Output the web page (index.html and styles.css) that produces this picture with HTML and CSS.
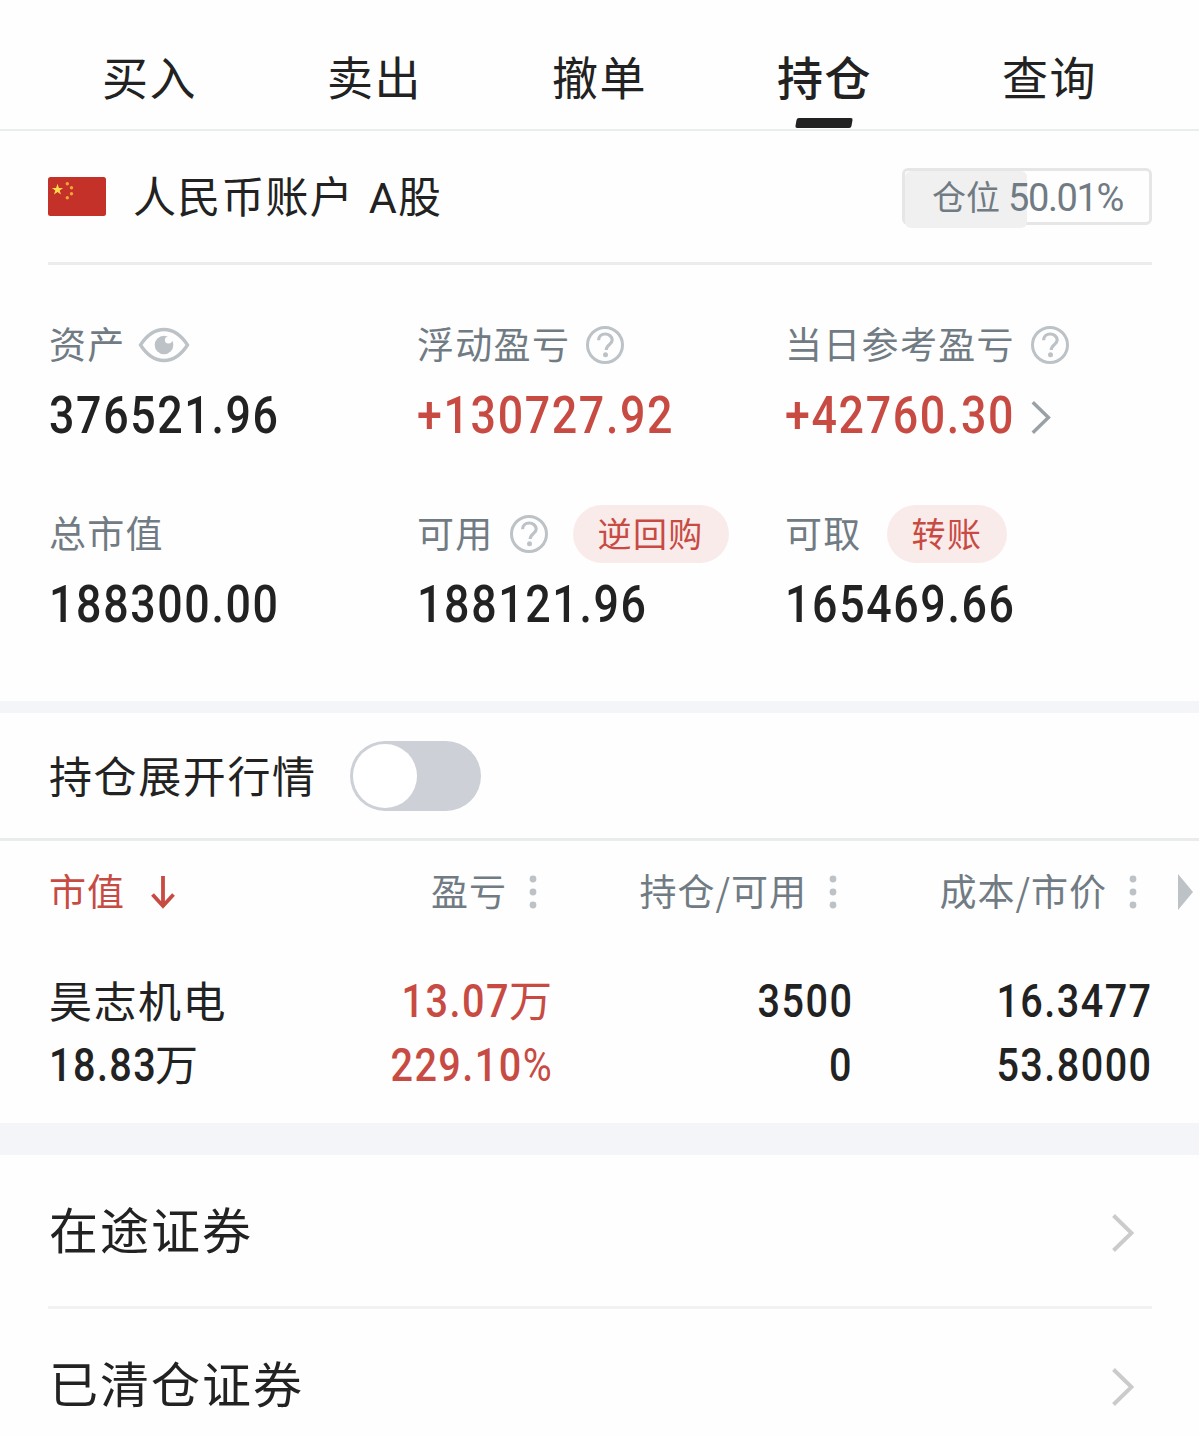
FILE: index.html
```html
<!DOCTYPE html>
<html lang="zh-CN">
<head>
  <meta charset="UTF-8">
  <meta name="viewport" content="width=device-width, initial-scale=1">
  <title>持仓</title>
  <link rel="stylesheet" href="styles.css">
</head>
<body>
  <!-- shared icons -->
  <svg class="sprite" width="0" height="0">
    <symbol id="help" viewBox="0 0 38 38">
      <circle cx="19" cy="19" r="17.5" fill="none" stroke="#bcc2c6" stroke-width="3"/>
      <path d="M12.600 14.200C12.600 10.400 15.500 8 19.200 8S26.200 10.500 26.200 14C26.200 18.500 20.200 18.800 20.200 24" fill="none" stroke="#bcc2c6" stroke-width="3.200"/>
      <circle cx="19.500" cy="28.800" r="2.500" fill="#bcc2c6"/>
    </symbol>
    <symbol id="dots" viewBox="0 0 8 34">
      <circle cx="4" cy="4" r="3.400" fill="#bcc2c6"/>
      <circle cx="4" cy="17" r="3.400" fill="#bcc2c6"/>
      <circle cx="4" cy="30" r="3.400" fill="#bcc2c6"/>
    </symbol>
    <symbol id="chevron" viewBox="0 0 22 38">
      <path d="M1.500 1.500 19.500 19 1.500 36.500" fill="none" stroke="currentColor" stroke-width="4"/>
    </symbol>
  </svg>

  <nav class="tabs">
    <a class="tab">买入</a>
    <a class="tab">卖出</a>
    <a class="tab">撤单</a>
    <a class="tab active">持仓</a>
    <a class="tab">查询</a>
  </nav>

  <header class="account">
    <svg class="flag" viewBox="0 0 58 39">
      <rect width="58" height="39" rx="2.500" fill="#c43128"/>
      <path d="M9.500 6.800 10.900 10.900 15.100 10.900 11.700 13.500 13 17.600 9.500 15.100 6 17.600 7.300 13.500 3.900 10.900 8.100 10.900Z" fill="#fbdc4b"/>
      <g fill="#f0a63a">
        <circle cx="19.300" cy="6.800" r="1.700"/>
        <circle cx="23.500" cy="10.800" r="1.700"/>
        <circle cx="23.500" cy="16.800" r="1.700"/>
        <circle cx="19.300" cy="20.700" r="1.700"/>
      </g>
    </svg>
    <h1 class="account-name">人民币账户 <span class="latin">A</span>股</h1>
    <div class="position">
      <div class="position-fill"></div>
      <span class="position-text">仓位<span class="percent">50.01%</span></span>
    </div>
  </header>

  <section class="assets">
    <div class="asset">
      <div class="label">资产
        <svg class="eye" viewBox="0 0 52 36">
          <path d="M2.500 18C9 8 17 2.500 26 2.500S43 8 49.500 18C43 28 35 33.500 26 33.500S9 28 2.500 18Z" fill="none" stroke="#bcc2c6" stroke-width="3.300"/>
          <circle cx="26" cy="18" r="9.300" fill="#bcc2c6"/>
          <circle cx="30.500" cy="13" r="3.600" fill="#fefefe"/>
        </svg>
      </div>
      <div class="value"><span class="num">376521.96</span></div>
    </div>
    <div class="asset">
      <div class="label">浮动盈亏<svg class="help"><use href="#help"/></svg></div>
      <div class="value red"><span class="num">+130727.92</span></div>
    </div>
    <div class="asset">
      <div class="label">当日参考盈亏<svg class="help"><use href="#help"/></svg></div>
      <div class="value red"><span class="num">+42760.30</span><svg class="more"><use href="#chevron"/></svg></div>
    </div>
    <div class="asset">
      <div class="label">总市值</div>
      <div class="value"><span class="num">188300.00</span></div>
    </div>
    <div class="asset">
      <div class="label">可用<svg class="help"><use href="#help"/></svg><a class="pill">逆回购</a></div>
      <div class="value"><span class="num">188121.96</span></div>
    </div>
    <div class="asset">
      <div class="label">可取<a class="pill">转账</a></div>
      <div class="value"><span class="num">165469.66</span></div>
    </div>
  </section>

  <div class="quote-row">
    <span>持仓展开行情</span>
    <span class="switch"></span>
  </div>

  <section class="holdings">
    <div class="row head">
      <div class="cell sorted">市值
        <svg class="sort" viewBox="0 0 26 34">
          <path d="M13 1V31M2.500 19.500 13 31 23.500 19.500" fill="none" stroke="currentColor" stroke-width="3.800"/>
        </svg>
      </div>
      <div class="cell">盈亏<svg class="dots"><use href="#dots"/></svg></div>
      <div class="cell">持仓/可用<svg class="dots"><use href="#dots"/></svg></div>
      <div class="cell">成本/市价<svg class="dots"><use href="#dots"/></svg></div>
      <svg class="next" viewBox="0 0 15 36"><path d="M0 0 15 18 0 36Z" fill="#bcc2c6"/></svg>
    </div>
    <div class="row stock">
      <div class="cell">
        <div class="line name">昊志机电</div>
        <div class="line"><span class="num">18.83</span><span class="unit">万</span></div>
      </div>
      <div class="cell red">
        <div class="line"><span class="num">13.07</span><span class="unit">万</span></div>
        <div class="line"><span class="num">229.10<span class="pct">%</span></span></div>
      </div>
      <div class="cell">
        <div class="line"><span class="num">3500</span></div>
        <div class="line"><span class="num">0</span></div>
      </div>
      <div class="cell">
        <div class="line"><span class="num">16.3477</span></div>
        <div class="line"><span class="num">53.8000</span></div>
      </div>
    </div>
  </section>

  <section class="links">
    <a class="link">在途证券<svg class="go"><use href="#chevron"/></svg></a>
    <a class="link">已清仓证券<svg class="go"><use href="#chevron"/></svg></a>
  </section>
</body>
</html>
```
FILE: styles.css
```css
:root {
  --bg: #fefefe;
  --text: #222;
  --muted: #717b83;
  --red: #c84b43;
  --line: #ececec;
  --band: #f3f5f9;
}
* {
  box-sizing: border-box;
}
body {
  margin: 0;
  background: var(--bg);
  color: var(--text);
  font-family: "Noto Sans CJK SC", sans-serif;
  font-weight: 400;
  height: 1436px;
  overflow: hidden;
}
svg {
  display: block;
  flex: none;
}
.sprite {
  position: absolute;
}
.red {
  color: var(--red);
}
/* narrow figures */
.num {
  display: inline-block;
  font-family: Roboto, sans-serif;
  font-weight: 500;
  letter-spacing: 0.037em;
  transform: scaleX(0.86);
  transform-origin: left center;
}

/* top tabs */
.tabs {
  display: flex;
  height: 131px;
  padding: 0 37px;
  border-bottom: 2px solid #eaeded;
}
.tab {
  position: relative;
  flex: 1;
  text-align: center;
  font-size: 46px;
  line-height: 150px;
  letter-spacing: 1.5px;
}
.tab.active {
  font-weight: 500;
}
.tab.active::after {
  content: "";
  position: absolute;
  left: 50%;
  top: 118px;
  width: 56px;
  height: 10px;
  margin-left: -29px;
  border-radius: 2px;
  background: var(--text);
  transform: skewX(-10deg);
}

/* account line */
.account {
  display: flex;
  align-items: center;
  height: 134px;
  margin: 0 47px 0 48px;
  border-bottom: 3px solid var(--line);
}
.flag {
  width: 58px;
  height: 39px;
}
.account-name {
  flex: 1;
  margin: 0 0 2px 27px;
  font-size: 43px;
  font-weight: 400;
  line-height: 60px;
  letter-spacing: 1.2px;
  word-spacing: 4px;
}
.latin {
  font-family: Roboto, sans-serif;
}
.position {
  position: relative;
  width: 250px;
  height: 57px;
  border: 3px solid #e6e6e6;
  border-radius: 6px;
  color: var(--muted);
  font-size: 34px;
  line-height: 49px;
}
.position-fill {
  position: absolute;
  left: 0;
  top: 0;
  width: 122px;
  height: 57px;
  border-radius: 6px;
  background: #f0f0f0;
}
.position-text {
  position: relative;
  display: flex;
  padding-left: 27px;
}
.percent {
  margin-left: 8px;
  font-family: Roboto, sans-serif;
  font-size: 38px;
  line-height: 54px;
  letter-spacing: -1.4px;
}

/* asset figures */
.assets {
  display: grid;
  grid-template-columns: repeat(3, 368px);
  grid-auto-rows: 189px;
  height: 436px;
  padding: 46px 0 0 49px;
}
.label {
  display: flex;
  align-items: center;
  height: 68px;
  padding-bottom: 4px;
  color: var(--muted);
  font-size: 37px;
  letter-spacing: 1.3px;
}
.label svg,
.pill {
  margin-top: 4px;
}
.value {
  display: flex;
  align-items: center;
  height: 72px;
  font-size: 52px;
}
.eye {
  width: 52px;
  height: 36px;
  margin-left: 12px;
}
.help {
  width: 38px;
  height: 38px;
  margin-left: 16px;
}
.more {
  width: 20px;
  height: 33px;
  margin: 4px 0 0 -22px;
  color: #99a1a7;
}
.pill {
  height: 58px;
  margin-left: 25px;
  padding: 0 25px;
  border-radius: 29px;
  background: #faebeb;
  color: var(--red);
  font-size: 34px;
  line-height: 55px;
}

/* quote switch */
.quote-row {
  display: flex;
  align-items: center;
  height: 140px;
  padding: 0 49px 4px;
  border-top: 12px solid var(--band);
  border-bottom: 3px solid #eaecec;
  font-size: 43px;
  letter-spacing: 1.6px;
}
.switch {
  width: 131px;
  height: 70px;
  margin: 5px 0 0 33px;
  padding: 3px;
  border-radius: 35px;
  background: #cdd0d6;
}
.switch::before {
  content: "";
  display: block;
  width: 64px;
  height: 64px;
  border-radius: 50%;
  background: #fff;
}

/* holdings table */
.holdings {
  height: 314px;
  border-bottom: 32px solid var(--band);
}
.row {
  display: grid;
  grid-template-columns: 203px repeat(3, 300px) 47px;
  padding-left: 49px;
}
.head {
  height: 102px;
  align-items: center;
  color: var(--muted);
  font-size: 37px;
  letter-spacing: 1px;
}
.head .cell {
  display: flex;
  align-items: center;
  justify-content: flex-end;
  padding: 0 15px 4px 0;
}
.head .cell svg {
  margin-top: 4px;
}
.head .sorted {
  justify-content: flex-start;
  color: var(--red);
}
.sort {
  width: 26px;
  height: 34px;
  margin-left: 25px;
}
.dots {
  width: 8px;
  height: 34px;
  margin-left: 22px;
}
.next {
  width: 15px;
  height: 36px;
  margin-left: 26px;
}
.stock {
  padding-top: 26px;
  font-size: 43px;
}
.line {
  display: flex;
  align-items: center;
  justify-content: flex-end;
  height: 64px;
  line-height: 64px;
}
.stock .num {
  margin-right: -1px;
  font-size: 46px;
  transform-origin: right center;
}
.stock .cell:first-child .line {
  justify-content: flex-start;
}
.stock .cell:first-child .num {
  margin-right: -20px;
  transform-origin: left center;
}
.line.name {
  padding-bottom: 4px;
  letter-spacing: 1.5px;
}
.unit {
  margin-top: -6px;
}
.pct {
  font-weight: 400;
}

/* bottom links */
.link {
  display: flex;
  align-items: center;
  justify-content: space-between;
  height: 154px;
  margin: 0 47px 0 48px;
  padding: 0 18px 6px 1px;
  border-bottom: 3px solid #f2f2f2;
  font-size: 49px;
  letter-spacing: 2px;
}
.link:last-child {
  height: 151px;
  border-bottom: 0;
}
.go {
  width: 22px;
  height: 38px;
  margin-top: 10px;
  color: #cbcbcb;
}
```
